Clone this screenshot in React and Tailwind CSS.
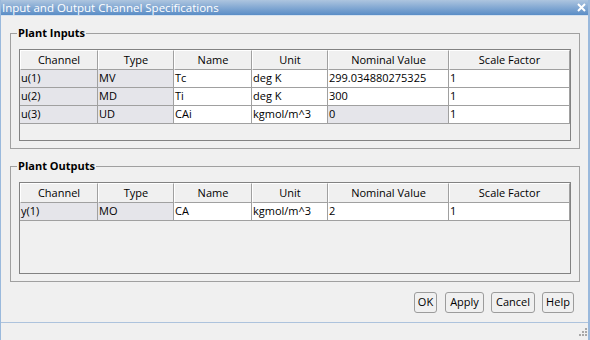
import React from 'react'

const font = { fontFamily: '"Open Sans", "Noto Sans", sans-serif' }

const cols = [
  { label: 'Channel', w: 'w-[78px]' },
  { label: 'Type', w: 'w-[76px]' },
  { label: 'Name', w: 'w-[78px]' },
  { label: 'Unit', w: 'w-[76px]' },
  { label: 'Nominal Value', w: 'w-[121px]' },
  { label: 'Scale Factor', w: 'w-[121px]' },
]

// grey = read-only cell
const inputRows = [
  { cells: ['u(1)', 'MV', 'Tc', 'deg K', '299.034880275325', '1'], grey: [true, true, false, false, false, false] },
  { cells: ['u(2)', 'MD', 'Ti', 'deg K', '300', '1'], grey: [true, true, false, false, false, false] },
  { cells: ['u(3)', 'UD', 'CAi', 'kgmol/m^3', '0', '1'], grey: [true, true, false, false, true, false] },
]

const outputRows = [
  { cells: ['y(1)', 'MO', 'CA', 'kgmol/m^3', '2', '1'], grey: [true, true, false, false, false, false] },
]

function Grid({ rows }) {
  return (
    <div className="w-[552px] h-[92px] border border-[#828282] bg-[#f0f0f0] overflow-hidden">
      <div className="flex h-[20px]">
        {cols.map((c, i) => (
          <div
            key={i}
            className={`${c.w} shrink-0 flex items-center justify-center text-[11px] text-black bg-[#f0f0f0] border border-t-white border-l-white border-r-[#a0a0a0] border-b-[#a0a0a0]`}
          >
            {c.label}
          </div>
        ))}
      </div>
      {rows.map((r, ri) => (
        <div key={ri} className="flex h-[18px]">
          {r.cells.map((v, ci) => (
            <div
              key={ci}
              className={`${cols[ci].w} shrink-0 flex items-center pl-[1px] text-[11px] text-black border-r border-b border-[#a0a0a0] ${r.grey[ci] ? 'bg-[#e5e5ea]' : 'bg-white'}`}
            >
              {v}
            </div>
          ))}
        </div>
      ))}
    </div>
  )
}

function Group({ title, children }) {
  return (
    <fieldset className="ml-[9px] mr-[10px] border border-[#a0a0a0] px-[8px] pt-[9px] pb-[7px] m-0">
      <legend className="-ml-[2px] px-[1px] text-[11px] font-bold text-black leading-[14px]">{title}</legend>
      {children}
    </fieldset>
  )
}

function Btn({ children, w }) {
  return (
    <button className={`${w} h-[21px] rounded-[3px] border border-[#9c9c9c] bg-[#f0f0f0] text-[11px] text-black flex items-center justify-center`}>
      {children}
    </button>
  )
}

export default function App() {
  return (
    <div style={font} className="w-[590px] h-[340px] bg-[#f0f0f0] border-l border-r-2 border-[#9ab9dc] flex flex-col overflow-hidden">
      {/* Title bar */}
      <div className="h-[15px] shrink-0 bg-gradient-to-b from-[#adc5df] to-[#5a8dc6] flex items-center justify-between pl-[1px] pr-[2px]">
        <span className="text-[11.5px] leading-[15px] text-white">Input and Output Channel Specifications</span>
        <svg width="9" height="9" viewBox="0 0 9 9">
          <path d="M1 1 L8 8 M8 1 L1 8" stroke="white" strokeWidth="2" />
        </svg>
      </div>
      <div className="h-[1px] bg-[#d6e2ef] shrink-0" />

      <div className="pt-[10px] flex flex-col gap-[10px]">
        <Group title="Plant Inputs">
          <Grid rows={inputRows} />
        </Group>
        <Group title="Plant Outputs">
          <Grid rows={outputRows} />
        </Group>
      </div>

      <div className="flex justify-end pr-[14px] pt-[10px]">
        <Btn w="w-[23px]">OK</Btn>
        <div className="w-[8px]" />
        <Btn w="w-[39px]">Apply</Btn>
        <div className="w-[7px]" />
        <Btn w="w-[44px]">Cancel</Btn>
        <div className="w-[7px]" />
        <Btn w="w-[32px]">Help</Btn>
      </div>

      <div className="mt-auto h-[18px] border-t border-[#adc3dd] flex justify-end items-end pr-[1px] pb-[2px]">
        <svg width="10" height="10" viewBox="0 0 10 10" fill="#a8a8a8">
          <rect x="8" y="0" width="2" height="2" />
          <rect x="5" y="3" width="2" height="2" />
          <rect x="8" y="3" width="2" height="2" />
          <rect x="2" y="6" width="2" height="2" />
          <rect x="5" y="6" width="2" height="2" />
          <rect x="8" y="6" width="2" height="2" />
        </svg>
      </div>
    </div>
  )
}
